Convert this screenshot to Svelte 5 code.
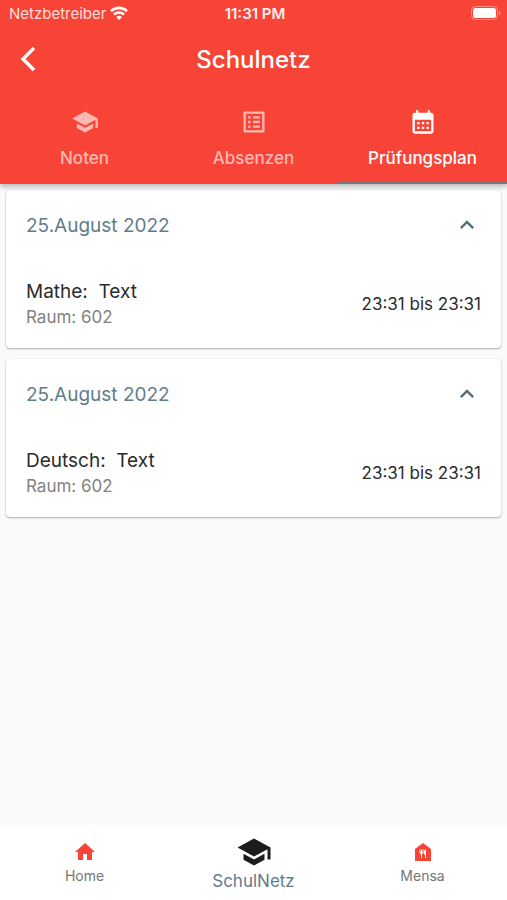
<script>
    let activeTab = $state('Prüfungsplan')

    const tabs = [
        { title: 'Noten', icon: 'M5 13.18v4L12 21l7-3.82v-4L12 17l-7-3.82zM12 3L1 9l11 6 9-4.91V17h2V9L12 3z' },
        { title: 'Absenzen', icon: 'M19 5v14H5V5h14m1.1-2H3.9c-.5 0-.9.4-.9.9v16.2c0 .4.4.9.9.9h16.2c.4 0 .9-.5.9-.9V3.9c0-.5-.5-.9-.9-.9zM11 7h6v2h-6V7zm0 4h6v2h-6v-2zm0 4h6v2h-6zM7 7h2v2H7zm0 4h2v2H7zm0 4h2v2H7z' },
        { title: 'Prüfungsplan', icon: 'M19 4h-1V2h-2v2H8V2H6v2H5c-1.11 0-1.99.9-1.99 2L3 20a2 2 0 0 0 2 2h14c1.1 0 2-.9 2-2V6c0-1.1-.9-2-2-2zm0 16H5V10h14v10zM9 14H7v-2h2v2zm4 0h-2v-2h2v2zm4 0h-2v-2h2v2zm-8 4H7v-2h2v2zm4 0h-2v-2h2v2zm4 0h-2v-2h2v2z' }
    ]

    let exams = $state([
        { date: '25.August 2022', subject: 'Mathe', text: 'Text', room: '602', from: '23:31', to: '23:31', open: true },
        { date: '25.August 2022', subject: 'Deutsch', text: 'Text', room: '602', from: '23:31', to: '23:31', open: true }
    ])

    const pages = [
        { title: 'Home', icon: 'M10 20v-6h4v6h5v-8h3L12 3 2 12h3v8z' },
        { title: 'SchulNetz', icon: tabs[0].icon, current: true },
        { title: 'Mensa', icon: 'M12 3L4 9v12h16V9l-8-6zm.5 9.5c0 .83-.67 1.5-1.5 1.5v4h-1v-4c-.83 0-1.5-.67-1.5-1.5v-3h1v3h.5v-3h1v3h.5v-3h1v3zM15 18h-1v-3.5h-1v-3c0-1.1.9-2 2-2V18z' }
    ]
</script>

<div class="app">
    <header>
        <div class="status">
            <span class="carrier">
                Netzbetreiber
                <svg width="18" height="14" viewBox="0 0 18 14" fill="none" stroke="#fff" stroke-width="2.6">
                    <path d="M1 5.2a11.3 11.3 0 0 1 16 0" />
                    <path d="M4 8.6a7 7 0 0 1 10 0" />
                    <path d="M9 14l-2.9-2.9a4.1 4.1 0 0 1 5.8 0z" fill="#fff" stroke="none" />
                </svg>
            </span>
            <span class="clock">11:31 PM</span>
            <svg class="battery" width="30" height="14" viewBox="0 0 30 14">
                <rect x="0.5" y="0.5" width="26" height="13" rx="4" fill="none" stroke="#fff" stroke-opacity=".4" />
                <rect x="2" y="2" width="23" height="10" rx="2.5" fill="#fff" />
                <path d="M28 5v4q1.6-.6 1.6-2T28 5z" fill="#fff" fill-opacity=".5" />
            </svg>
        </div>
        <div class="toolbar">
            <button class="back" aria-label="Zurück">
                <svg width="16" height="26" viewBox="0 0 16 26" fill="none" stroke="#fff" stroke-width="3.4">
                    <path d="M14 2L3 13l11 11" />
                </svg>
            </button>
            <h1>Schulnetz</h1>
        </div>
        <div class="tabs" role="tablist">
            {#each tabs as tab}
                <button class="tab" class:active={tab.title === activeTab} role="tab" aria-selected={tab.title === activeTab} onclick={() => activeTab = tab.title}>
                    <svg width="28" height="28" viewBox="0 0 24 24"><path d={tab.icon} /></svg>
                    <span>{tab.title}</span>
                </button>
            {/each}
        </div>
    </header>

    <main>
        {#each exams as exam}
            <section class="card">
                <button class="card-head" aria-expanded={exam.open} onclick={() => exam.open = !exam.open}>
                    <span>{exam.date}</span>
                    <svg class:closed={!exam.open} width="28" height="28" viewBox="0 0 24 24"><path d="M12 8l-6 6 1.41 1.41L12 10.83l4.59 4.58L18 14z" /></svg>
                </button>
                {#if exam.open}
                    <div class="card-body">
                        <div>
                            <p class="subject">{exam.subject}:&nbsp; {exam.text}</p>
                            <p class="room">Raum: {exam.room}</p>
                        </div>
                        <p class="time">{exam.from} bis {exam.to}</p>
                    </div>
                {/if}
            </section>
        {/each}
    </main>

    <nav>
        {#each pages as page}
            <button class="page" class:current={page.current}>
                <svg viewBox="0 0 24 24"><path d={page.icon} /></svg>
                <span>{page.title}</span>
            </button>
        {/each}
    </nav>
</div>

<style>
    :global(body) {
        margin: 0;
    }
    .app {
        display: flex;
        flex-direction: column;
        min-height: 100vh;
        background: #fafafa;
        font-family: Inter, "Liberation Sans", sans-serif;
        color: #2b2b2b;
    }
    button {
        padding: 0;
        border: none;
        background: none;
        font: inherit;
        color: inherit;
        cursor: pointer;
    }
    svg {
        display: block;
    }
    h1, p {
        margin: 0;
    }
    header {
        z-index: 1;
        background: #f74436;
        color: #fff;
        box-shadow: 0 3px 5px rgba(0, 0, 0, .25);
    }
    .status {
        display: grid;
        grid-template-columns: 1fr auto 1fr;
        align-items: center;
        height: 26px;
        padding: 0 6px 0 9px;
        font-size: 15px;
    }
    .carrier {
        display: flex;
        align-items: center;
        gap: 4px;
        color: #ffdedb;
    }
    .clock {
        font-weight: 600;
        color: #ffeeec;
    }
    .battery {
        justify-self: end;
    }
    .toolbar {
        display: grid;
        grid-template-columns: 56px 1fr 56px;
        align-items: center;
        height: 66px;
    }
    .back {
        display: flex;
        justify-content: center;
    }
    h1 {
        text-align: center;
        font-size: 24px;
        font-weight: 500;
    }
    .tabs {
        display: grid;
        grid-template-columns: repeat(3, 1fr);
        height: 92px;
    }
    .tab {
        display: flex;
        flex-direction: column;
        align-items: center;
        gap: 12px;
        padding-top: 16px;
        border-bottom: 3px solid transparent;
        font-size: 17px;
        font-weight: 500;
        line-height: 20px;
        color: #ffb9b2;
        fill: currentColor;
    }
    .tab.active {
        border-color: #74777d;
        color: #fff;
    }
    main {
        flex: 1;
        display: flex;
        flex-direction: column;
        gap: 11px;
        padding: 6px;
    }
    .card {
        border-radius: 4px;
        background: #fff;
        box-shadow: 0 1px 2px rgba(0, 0, 0, .3), 0 0 1px rgba(0, 0, 0, .2);
    }
    .card-head {
        display: flex;
        align-items: center;
        justify-content: space-between;
        width: 100%;
        height: 70px;
        padding: 0 20px;
        font-size: 19px;
        color: #607d8b;
        fill: #546e7a;
    }
    .closed {
        transform: rotate(180deg);
    }
    .card-body {
        display: flex;
        align-items: center;
        justify-content: space-between;
        padding: 19px 20px;
    }
    .subject {
        font-size: 19px;
        line-height: 26px;
    }
    .room {
        font-size: 17px;
        line-height: 24px;
        color: #828282;
    }
    .time {
        font-size: 17px;
    }
    nav {
        display: grid;
        grid-template-columns: repeat(3, 1fr);
        height: 75px;
        background: #fff;
    }
    .page {
        display: flex;
        flex-direction: column;
        align-items: center;
        gap: 2px;
        padding-top: 15px;
        font-size: 14px;
        line-height: 20px;
        color: #757575;
        fill: #f74436;
    }
    .page svg {
        width: 24px;
        height: 24px;
    }
    .page.current {
        gap: 1px;
        padding-top: 9px;
        font-size: 17px;
        color: #607d8b;
        fill: #1c1c1c;
    }
    .page.current svg {
        width: 36px;
        height: 36px;
    }
</style>
